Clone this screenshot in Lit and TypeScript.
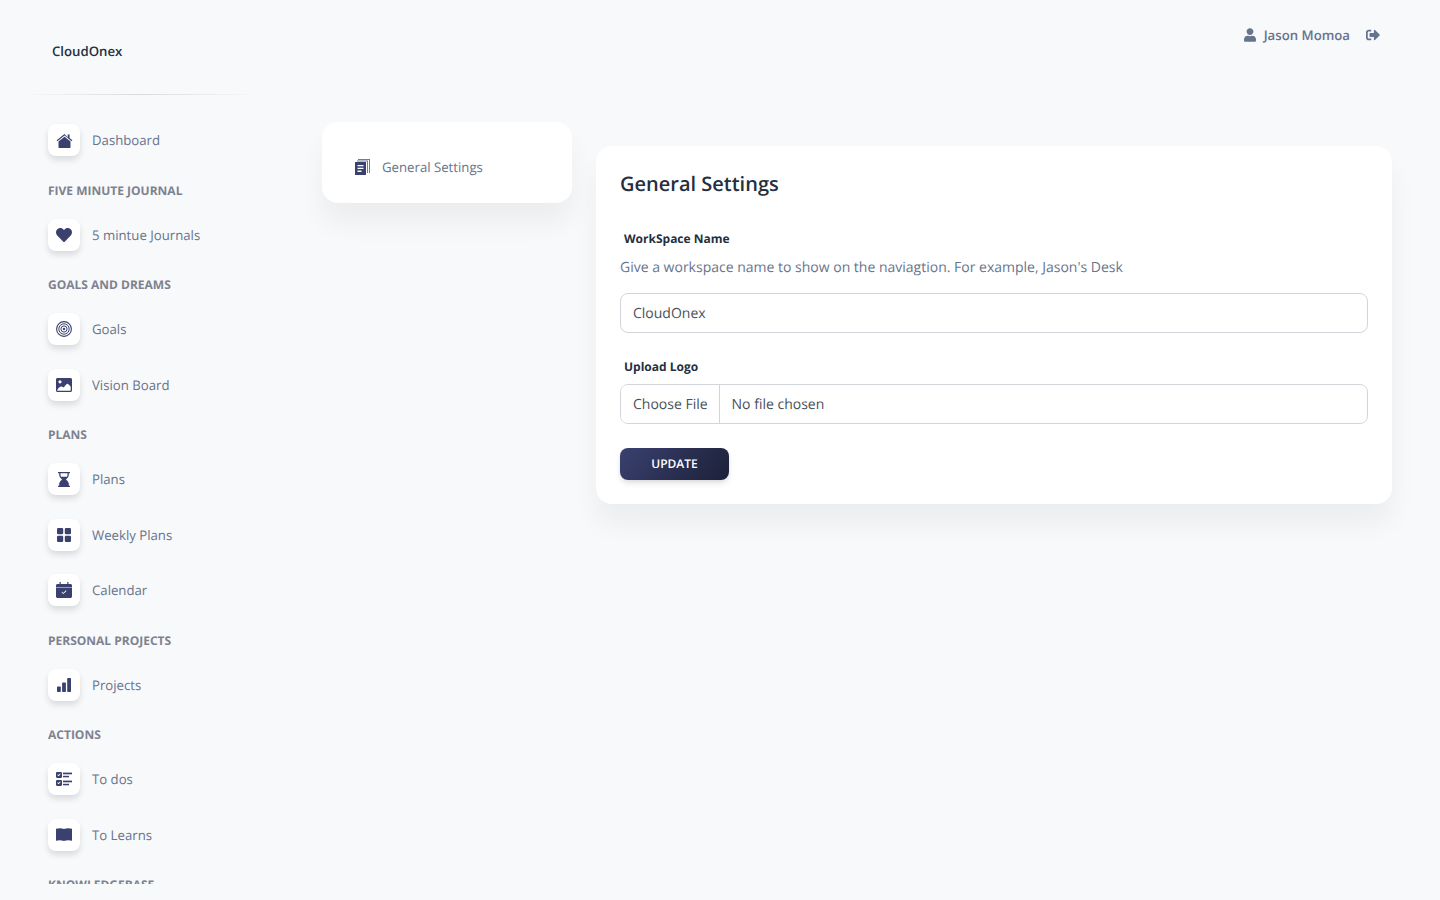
import { css, html, LitElement, svg } from 'lit';
import { customElement } from 'lit/decorators.js';

const icons = {
  home: svg`<svg viewBox="0 0 18 16" width="17" height="15"><path d="M9 1 .6 7.800l.8 1L9 2.700l7.600 6.100.8-1-3-2.400V1.500h-2v3.300L9 1z"/><path d="M9 4 2.600 9.100v6.100c0 .4.300.8.800.8h11.200c.5 0 .8-.4.8-.8V9.100L9 4z"/></svg>`,
  heart: svg`<svg viewBox="0 0 512 512" width="16" height="16"><path d="M462.3 62.6C407.5 15.9 326 24.3 275.7 76.2L256 96.5l-19.7-20.3C186.1 24.3 104.5 15.9 49.7 62.6c-62.8 53.6-66.1 149.8-9.9 207.9l193.5 199.8c12.5 12.9 32.8 12.9 45.3 0l193.5-199.8c56.3-58.1 53-154.3-9.8-207.9z"/></svg>`,
  goal: svg`<svg class="goal" viewBox="0 0 16 16" width="16" height="16" stroke="currentColor"><circle cx="8" cy="8" r="7.400" stroke-width="1.100"/><circle cx="8" cy="8" r="5.200" stroke-width="1"/><circle cx="8" cy="8" r="3.100" stroke-width="1"/><circle cx="8" cy="8" r="1.200" fill="currentColor" stroke="none"/></svg>`,
  image: svg`<svg viewBox="0 0 16 14" width="16" height="14"><path fill-rule="evenodd" d="M1.500 0h13c.8 0 1.500.7 1.500 1.500v11c0 .8-.7 1.500-1.500 1.500h-13C.7 14 0 13.300 0 12.500v-11C0 .7.700 0 1.500 0zM4 2.200a1.600 1.600 0 1 0 0 3.200 1.600 1.600 0 0 0 0-3.200zM1.300 12.700h13.400V8.700c-1.400-1.600-2.300-3-3.300-3-1.300 0-2.400 2.800-3.900 3.800-.7-.6-1.400-1-2.100-1-1.700 0-3 1.500-4.100 3.400v.8z"/></svg>`,
  hourglass: svg`<svg viewBox="0 0 12 15" width="12" height="15"><path fill-rule="evenodd" d="M0 0h12v1.300h-1.200v1.600c0 1.900-1.400 3.300-2.900 4.600 1.500 1.300 2.900 2.700 2.900 4.600v1.600H12V15H0v-1.300h1.200v-1.600c0-1.900 1.400-3.300 2.900-4.600-1.500-1.300-2.900-2.700-2.900-4.600V1.300H0V0zm2.500 1.300v1.600c0 .7.200 1.200.6 1.800h5.800c.4-.6.600-1.100.6-1.800V1.300h-7z"/></svg>`,
  grid: svg`<svg viewBox="0 0 14 14" width="14" height="14"><rect width="6.200" height="6.200" rx="1.200"/><rect x="7.800" width="6.200" height="6.200" rx="1.200"/><rect y="7.800" width="6.200" height="6.200" rx="1.200"/><rect x="7.800" y="7.800" width="6.200" height="6.200" rx="1.200"/></svg>`,
  calendar: svg`<svg viewBox="0 0 16 16" width="16" height="16"><path fill-rule="evenodd" d="M3.500 0h1.200v2h6.600V0h1.200v2h2c.8 0 1.500.7 1.500 1.500V5H0V3.500C0 2.700.7 2 1.500 2h2V0zM0 5.600h16v8.900c0 .8-.7 1.500-1.500 1.500h-13C.7 16 0 15.300 0 14.500V5.600zm10.500 3.300-.6-.6-2.600 2.600-1.200-1.200-.6.600 1.800 1.800 3.200-3.200z"/></svg>`,
  bars: svg`<svg viewBox="0 0 14 14" width="14" height="14"><rect y="8.500" width="3.800" height="5.500" rx=".7"/><rect x="5.100" y="4.500" width="3.800" height="9.500" rx=".7"/><rect x="10.200" width="3.800" height="14" rx=".7"/></svg>`,
  todo: svg`<svg viewBox="0 0 16 14" width="16" height="14"><path fill-rule="evenodd" d="M1.200 0h3.600C5.500 0 6 .5 6 1.200v3.600C6 5.500 5.500 6 4.800 6H1.200C.5 6 0 5.500 0 4.800V1.200C0 .5.500 0 1.200 0zm3.500 2-.6-.6-1.500 1.600-.7-.7-.6.600 1.300 1.300L4.700 2zM1.200 8h3.600C5.500 8 6 8.500 6 9.200v3.600c0 .7-.5 1.200-1.200 1.200H1.200C.5 14 0 13.500 0 12.800V9.200C0 8.500.500 8 1.200 8zm3.500 2-.6-.6-1.500 1.600-.7-.7-.6.600 1.300 1.300L4.700 10z"/><rect x="7" y=".6" width="9" height="1.700"/><rect x="7" y="3.800" width="6" height="1.500"/><rect x="7" y="8.600" width="9" height="1.700"/><rect x="7" y="11.800" width="6" height="1.500"/></svg>`,
  book: svg`<svg viewBox="0 0 16 13" width="16" height="13"><path d="M0 .8C2.500 0 5.800 0 8 1 10.200 0 13.500 0 16 .8v11.900c-2.500-.7-5.800-.7-8 .3-2.200-1-5.500-1-8-.3V.8z"/></svg>`,
  pages: svg`<svg viewBox="0 0 15 16" width="15" height="16"><path d="M3 0h12v14h-1V1H3V0zM2 1.500h11v12.500h-1V2.500H2v-1z" opacity=".7"/><path fill-rule="evenodd" d="M0 3h11v13H0V3zm2.500 3v1.300h6V6h-6zm0 2.800v1.300h6V8.800h-6zm0 2.800v1.300h4v-1.300h-4z"/></svg>`,
  user: svg`<svg viewBox="0 0 448 512" width="12" height="14"><path d="M224 256c70.700 0 128-57.300 128-128S294.700 0 224 0 96 57.300 96 128s57.300 128 128 128zm89.600 32h-16.700c-22.200 10.200-46.900 16-72.900 16s-50.600-5.800-72.900-16h-16.700C60.200 288 0 348.200 0 422.400V464c0 26.500 21.500 48 48 48h352c26.500 0 48-21.500 48-48v-41.600c0-74.200-60.200-134.400-134.400-134.400z"/></svg>`,
  signOut: svg`<svg viewBox="0 0 512 512" width="14" height="14"><path d="M497 273L329 441c-15 15-41 4.500-41-17v-96H152c-13.300 0-24-10.700-24-24v-96c0-13.300 10.700-24 24-24h136V88c0-21.400 25.900-32 41-17l168 168c9.300 9.400 9.300 24.600 0 34zM192 436v-40c0-6.600-5.400-12-12-12H96c-17.700 0-32-14.300-32-32V160c0-17.700 14.300-32 32-32h84c6.600 0 12-5.400 12-12V76c0-6.600-5.400-12-12-12H96c-53 0-96 43-96 96v192c0 53 43 96 96 96h84c6.600 0 12-5.400 12-12z"/></svg>`,
};

const nav = [
  { label: 'Dashboard', icon: icons.home },
  { heading: 'Five minute journal' },
  { label: '5 mintue Journals', icon: icons.heart },
  { heading: 'Goals and dreams' },
  { label: 'Goals', icon: icons.goal },
  { label: 'Vision Board', icon: icons.image },
  { heading: 'Plans' },
  { label: 'Plans', icon: icons.hourglass },
  { label: 'Weekly Plans', icon: icons.grid },
  { label: 'Calendar', icon: icons.calendar },
  { heading: 'Personal projects' },
  { label: 'Projects', icon: icons.bars },
  { heading: 'Actions' },
  { label: 'To dos', icon: icons.todo },
  { label: 'To Learns', icon: icons.book },
  { heading: 'Knowledgebase' },
];

@customElement('app-root')
export class AppRoot extends LitElement {
  static styles = css`
    *,
    *::after,
    *::before {
      box-sizing: border-box;
    }

    :host {
      display: flex;
      height: 900px;
      overflow: hidden;
      background: #f8f9fa;
      font-family: 'Open Sans', sans-serif;
      font-size: 14px;
      color: #67748e;
      text-rendering: geometricPrecision;
    }

    .sidebar {
      flex: 0 0 250px;
      margin-left: 16px;
      height: 884px;
      display: flex;
      flex-direction: column;
    }

    .brand {
      height: 78px;
      padding: 24px 0 0 36px;
      margin-top: 16px;
      font-size: 13.2px;
      line-height: 22px;
      font-weight: 600;
      color: #252f40;
    }

    .divider {
      height: 1px;
      margin: 0 6px 0 4px;
      background: linear-gradient(90deg, transparent, rgba(0, 0, 0, 0.12), transparent);
    }

    .nav {
      flex: 1;
      min-height: 0;
      overflow: hidden;
      padding: 17.5px 0 0 32px;
    }

    .nav-item {
      height: 55.5px;
      display: flex;
      align-items: center;
      gap: 12px;
      font-size: 13.2px;
    }

    .nav-icon {
      width: 32px;
      height: 32px;
      flex: none;
      display: flex;
      align-items: center;
      justify-content: center;
      background: #fff;
      border-radius: 8px;
      color: #3a416f;
      box-shadow: 0 4px 6px rgba(0, 0, 0, 0.12);
    }

    svg {
      display: block;
      fill: currentColor;
    }

    svg.goal {
      fill: none;
    }

    .nav-heading {
      margin: 13.75px 0 7.25px;
      font-size: 12px;
      line-height: 18px;
      font-weight: 700;
      text-transform: uppercase;
      color: #7d8290;
    }

    .main {
      flex: 1;
      min-width: 0;
      display: flex;
      flex-direction: column;
    }

    .topbar {
      height: 122px;
      padding: 24px 60px 0 0;
      display: flex;
      align-items: flex-start;
      justify-content: flex-end;
      gap: 16px;
      font-size: 13.2px;
      font-weight: 600;
    }

    .user {
      display: flex;
      align-items: center;
      gap: 8px;
      height: 22px;
    }

    .logout {
      height: 22px;
      display: flex;
      align-items: center;
    }

    .content {
      display: flex;
      align-items: flex-start;
      gap: 24px;
      padding: 0 48px 0 56px;
    }

    .card {
      background: #fff;
      border-radius: 16px;
      box-shadow: 0 20px 27px rgba(0, 0, 0, 0.05);
    }

    .menu-card {
      flex: 0 0 250px;
      height: 81px;
      padding: 34px 0 0 33px;
      display: flex;
      align-items: flex-start;
      gap: 12px;
      font-size: 13.2px;
      line-height: 22px;
    }

    .menu-card svg {
      color: #3a416f;
      margin-top: 3px;
    }

    .form-card {
      flex: 1;
      min-width: 0;
      margin-top: 24px;
      padding: 24px;
    }

    h5 {
      margin: 0 0 33px;
      font-size: 20px;
      line-height: 27px;
      font-weight: 600;
      color: #252f40;
    }

    label {
      display: block;
      margin: 0 0 8px 4px;
      font-size: 12px;
      line-height: 18px;
      font-weight: 700;
      color: #252f40;
    }

    .help {
      margin: 0 0 14px;
      padding-top: 1px;
      line-height: 22px;
    }

    .control {
      display: block;
      width: 100%;
      height: 40px;
      padding: 8px 12px;
      border: 1px solid #d2d6da;
      border-radius: 8px;
      background: #fff;
      font: inherit;
      line-height: 22px;
      color: #495057;
      outline: none;
      text-rendering: inherit;
    }

    .file {
      overflow: hidden;
      padding: 9px 12px 7px;
    }

    .file::file-selector-button {
      height: 38px;
      margin: -9px 12px -7px -12px;
      padding: 9px 11px 7px 12px;
      border: 0;
      border-right: 1px solid #d2d6da;
      border-radius: 0;
      background: #fff;
      font: inherit;
      color: #495057;
      text-rendering: inherit;
    }

    .upload-label {
      margin-top: 25px;
    }

    .update {
      display: block;
      width: 109px;
      height: 32px;
      margin-top: 24px;
      padding: 0 0 2px;
      border: 0;
      border-radius: 8px;
      background: linear-gradient(310deg, #1c2038, #3a416f);
      font: inherit;
      font-size: 12px;
      font-weight: 600;
      text-transform: uppercase;
      text-rendering: inherit;
      color: #fff;
      box-shadow: 0 4px 7px -1px rgba(0, 0, 0, 0.11), 0 2px 4px -1px rgba(0, 0, 0, 0.07);
    }
  `;

  render() {
    return html`
      <aside class="sidebar">
        <div class="brand">CloudOnex</div>
        <div class="divider"></div>
        <nav class="nav">
          ${nav.map((item) =>
            item.heading
              ? html`<div class="nav-heading">${item.heading}</div>`
              : html`<div class="nav-item">
                  <span class="nav-icon">${item.icon}</span>${item.label}
                </div>`
          )}
        </nav>
      </aside>
      <div class="main">
        <header class="topbar">
          <span class="user">${icons.user}Jason Momoa</span>
          <span class="logout">${icons.signOut}</span>
        </header>
        <div class="content">
          <div class="card menu-card">${icons.pages}General Settings</div>
          <section class="card form-card">
            <h5>General Settings</h5>
            <label>WorkSpace Name</label>
            <p class="help">Give a workspace name to show on the naviagtion. For example, Jason's Desk</p>
            <input class="control" type="text" value="CloudOnex" />
            <label class="upload-label">Upload Logo</label>
            <input class="control file" type="file" />
            <button class="update">Update</button>
          </section>
        </div>
      </div>
    `;
  }
}
